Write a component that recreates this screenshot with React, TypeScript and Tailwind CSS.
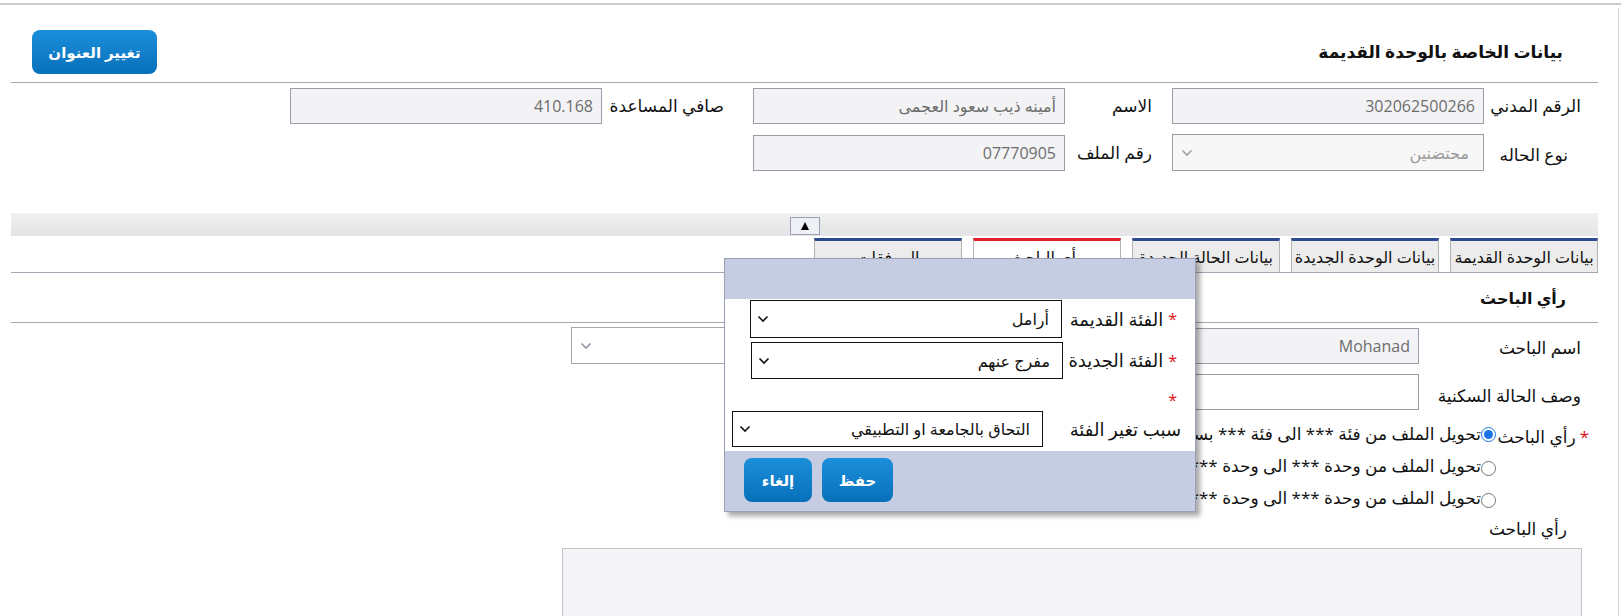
import React from "react";

function Chevron({ className = "" }: { className?: string }) {
  return (
    <svg width="12" height="8" viewBox="0 0 12 8" className={className}>
      <path d="M1.5 1.5 L6 6 L10.5 1.5" fill="none" stroke="currentColor" strokeWidth="1.6" />
    </svg>
  );
}

function GreyBox({ value, w = "w-[312px]" }: { value: string; w?: string }) {
  return (
    <div className={`${w} h-[36px] shrink-0 border border-[#9a9ca8] bg-[#f3f3f5] px-[8px] flex items-center text-[#6d6d6d] text-[16px]`}>
      {value}
    </div>
  );
}

function Tab({ label, active = false }: { label: string; active?: boolean }) {
  return (
    <div
      className={`w-[148px] h-[34px] shrink-0 flex items-center justify-center overflow-hidden whitespace-nowrap border-x border-[#b3b3b3] text-[16px] text-[#111] ${
        active ? "border-t-[3px] border-t-[#e3232b] bg-white" : "border-t-[3px] border-t-[#2d4a92] bg-[#ececec]"
      }`}
    >
      {label}
    </div>
  );
}

function BlueButton({ label, w }: { label: string; w: string }) {
  return (
    <button className={`${w} h-[44px] shrink-0 rounded-[8px] bg-gradient-to-b from-[#1b8fdb] to-[#0870ba] text-white text-[15px] font-bold`}>
      {label}
    </button>
  );
}

function Radio({ label, checked = false }: { label: string; checked?: boolean }) {
  return (
    <div className="h-[32px] flex items-center whitespace-nowrap">
      {checked ? (
        <span className="w-[15px] h-[15px] shrink-0 rounded-full border border-[#1a73e8] bg-white flex items-center justify-center">
          <span className="w-[9px] h-[9px] rounded-full bg-[#1a73e8]" />
        </span>
      ) : (
        <span className="w-[15px] h-[15px] shrink-0 rounded-full border border-[#767676] bg-white mt-[5px]" />
      )}
      <span className="text-[17px] text-[#111]">{label}</span>
    </div>
  );
}

export default function App() {
  return (
    <div dir="rtl" className="relative w-[1621px] h-[616px] overflow-hidden bg-white text-[#111] font-['Open_Sans','DejaVu_Sans',sans-serif]">
      <div className="h-[3px]" />
      <div className="h-[2px] bg-[#cbcbcb]" />
      <div className="mt-[3px] mr-[2px] border-r border-[#d0d0d0] pr-[20px] pl-[11px] h-[620px]">
        {/* Header */}
        <div className="flex items-center justify-between pt-[22px] pb-[8px]">
          <h2 className="pr-[35px] text-[17px] font-bold">بيانات الخاصة بالوحدة القديمة</h2>
          <div className="ml-[21px]">
            <BlueButton label="تغيير العنوان" w="w-[125px]" />
          </div>
        </div>
        <div className="border-t border-[#aaa5b5]" />

        {/* Old unit rows */}
        <div className="pt-[5px] flex flex-col gap-[10px]">
          <div className="flex items-center">
            <div className="w-[114px] shrink-0 pr-[17px] text-[17px] whitespace-nowrap">الرقم المدني</div>
            <GreyBox value="302062500266" />
            <div className="w-[107px] shrink-0 pr-[20px] text-[17px]">الاسم</div>
            <GreyBox value="أمينه ذيب سعود العجمى" />
            <div className="w-[151px] shrink-0 pr-[29px] text-[17px] whitespace-nowrap">صافي المساعدة</div>
            <GreyBox value="410.168" />
          </div>
          <div className="flex items-center">
            <div className="w-[114px] shrink-0 pr-[30px] text-[17px] whitespace-nowrap pt-[4px]">نوع الحاله</div>
            <div className="w-[312px] h-[37px] shrink-0 border border-[#9a9ca8] bg-[#f7f7f8] pr-[14px] pl-[8px] flex items-center justify-between text-[#9a9a9a] text-[16px]">
              <span>محتضنين</span>
              <Chevron className="text-[#a0a0a8]" />
            </div>
            <div className="w-[107px] shrink-0 pr-[20px] text-[17px] whitespace-nowrap">رقم الملف</div>
            <GreyBox value="07770905" />
          </div>
        </div>

        {/* Collapse band */}
        <div className="mt-[42px] h-[23px] bg-gradient-to-b from-[#f0f0f0] to-[#e4e4e6] flex justify-center items-start pt-[4px]">
          <div className="w-[30px] h-[18px] border border-[#9aa0b6] bg-[#eef0f5] flex items-center justify-center">
            <svg width="10" height="10" viewBox="0 0 10 10">
              <path d="M5 1 L9 9 L1 9 Z" fill="#000" />
            </svg>
          </div>
        </div>

        {/* Tabs */}
        <div className="mt-[2px] flex gap-[11px]">
          <Tab label="بيانات الوحدة القديمة" />
          <Tab label="بيانات الوحدة الجديدة" />
          <Tab label="بيانات الحالة الجديدة" />
          <Tab label="رأي الباحث" active />
          <Tab label="المرفقات" />
        </div>
        <div className="border-t border-[#aaa5b5]" />

        <div className="h-[49px] flex items-center pr-[32px] text-[16px] font-bold">رأي الباحث</div>
        <div className="border-t border-[#aaa5b5]" />

        {/* Researcher rows */}
        <div className="pt-[4px]">
          <div className="flex items-center">
            <div className="w-[179px] shrink-0 pr-[17px] text-[17px] pt-[4px]">اسم الباحث</div>
            <GreyBox value="Mohanad" />
            <div className="w-[224px] shrink-0" />
            <div className="w-[312px] h-[37px] shrink-0 border border-[#a3aaa3] bg-white pl-[8px] flex items-center justify-end">
              <Chevron className="text-[#9b8fa6]" />
            </div>
          </div>
          <div className="mt-[10px] flex items-center">
            <div className="w-[179px] shrink-0 pr-[17px] text-[17px] pt-[8px] whitespace-nowrap">وصف الحالة السكنية</div>
            <div className="w-[312px] h-[36px] shrink-0 border border-[#9a9ca8] bg-white" />
          </div>
          <div className="mt-[8px] flex items-start">
            <div className="w-[102px] shrink-0 pr-[9px] h-[32px] flex items-center pt-[6px] text-[17px] whitespace-nowrap">
              <span className="text-[#e0101a] ml-[4px]">*</span>
              <span>رأي الباحث</span>
            </div>
            <div className="flex flex-col">
              <Radio label="تحويل الملف من فئة *** الى فئة *** بسبب ***" checked />
              <Radio label="تحويل الملف من وحدة *** الى وحدة *** بسبب ***" />
              <Radio label="تحويل الملف من وحدة *** الى وحدة *** بسبب ***" />
            </div>
          </div>
          <div className="mt-[3px] h-[24px] flex items-center pr-[31px] text-[17px]">رأي الباحث</div>
          <div className="mt-[7px] mr-[16px] w-[1020px] h-[90px] border border-[#c3c3cb] bg-[#f4f4f6]" />
        </div>
      </div>

      {/* Modal */}
      <div className="absolute left-[724px] top-[258px] w-[472px] h-[254px] border border-[#9aa1b6] bg-white shadow-[4px_4px_5px_rgba(0,0,0,0.35)] flex flex-col">
        <div className="h-[40px] shrink-0 bg-[#c6cde2]" />
        <div className="h-[152px] shrink-0 bg-white pt-[1px]">
          <div className="flex items-center">
            <div className="w-[133px] shrink-0 pr-[18px] flex items-center text-[18px] whitespace-nowrap">
              <span className="text-[#e0101a] ml-[5px] text-[16px]">*</span>
              <span>الفئة القديمة</span>
            </div>
            <div className="w-[312px] h-[38px] shrink-0 border border-[#111] bg-white pr-[12px] pl-[6px] flex items-center justify-between text-[16px]">
              <span>أرامل</span>
              <Chevron className="text-[#111]" />
            </div>
          </div>
          <div className="mt-[4px] flex items-center">
            <div className="w-[132px] shrink-0 pr-[18px] flex items-center text-[18px] whitespace-nowrap">
              <span className="text-[#e0101a] ml-[5px] text-[16px]">*</span>
              <span>الفئة الجديدة</span>
            </div>
            <div className="w-[312px] h-[37px] shrink-0 border border-[#111] bg-white pr-[12px] pl-[6px] flex items-center justify-between text-[16px]">
              <span>مفرج عنهم</span>
              <Chevron className="text-[#111]" />
            </div>
          </div>
          <div className="mt-[11px] h-[20px] pr-[18px] flex items-center text-[16px] text-[#e0101a]">*</div>
          <div className="mt-[1px] flex items-center">
            <div className="w-[152px] shrink-0 pr-[14px] text-[18px] whitespace-nowrap">سبب تغير الفئة</div>
            <div className="w-[311px] h-[36px] shrink-0 border border-[#111] bg-white pr-[12px] pl-[6px] flex items-center justify-between text-[16px]">
              <span>التحاق بالجامعة او التطبيقي</span>
              <Chevron className="text-[#111]" />
            </div>
          </div>
        </div>
        <div dir="ltr" className="flex-1 bg-[#c6cde2] flex items-start pt-[7px] pl-[19px] gap-[10px]">
          <BlueButton label="إلغاء" w="w-[68px]" />
          <BlueButton label="حفظ" w="w-[71px]" />
        </div>
      </div>
    </div>
  );
}
